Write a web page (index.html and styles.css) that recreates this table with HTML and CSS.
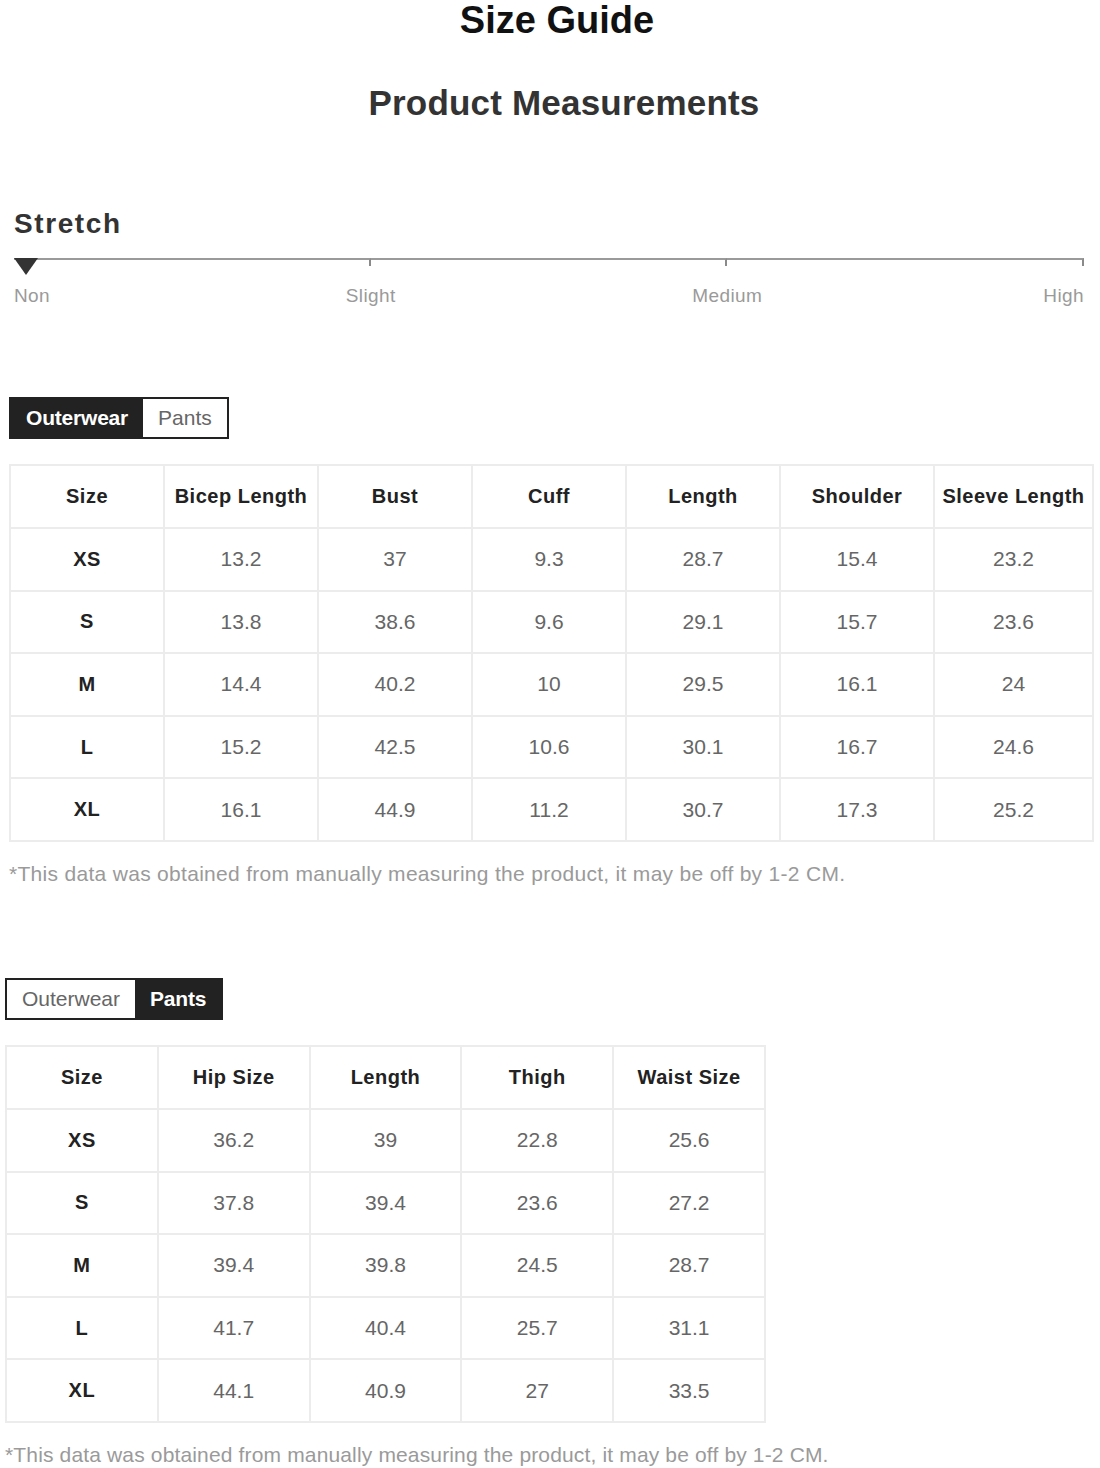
FILE: index.html
```html
<!DOCTYPE html>
<html lang="en">
<head>
<meta charset="utf-8">
<title>Size Guide</title>
<link rel="stylesheet" href="styles.css">
</head>
<body>
<div class="page">
  <h1 class="title">Size Guide</h1>
  <h2 class="subtitle">Product Measurements</h2>

  <section class="stretch">
    <div class="stretch-title">Stretch</div>
    <div class="scale">
      <div class="seg"></div>
      <div class="seg"></div>
      <div class="seg"></div>
      <span class="marker"></span>
    </div>
    <div class="scale-labels">
      <span class="lbl lbl-non">Non</span>
      <span class="lbl lbl-slight">Slight</span>
      <span class="lbl lbl-medium">Medium</span>
      <span class="lbl lbl-high">High</span>
    </div>
  </section>

  <section class="block block-outer">
    <div class="tabs">
      <span class="tab active">Outerwear</span>
      <span class="tab">Pants</span>
    </div>
    <table class="sizes sizes-outer">
      <colgroup>
        <col class="c"><col class="c"><col class="c"><col class="c"><col class="c"><col class="c"><col class="c-last">
      </colgroup>
      <thead>
        <tr><th>Size</th><th>Bicep Length</th><th>Bust</th><th>Cuff</th><th>Length</th><th>Shoulder</th><th>Sleeve Length</th></tr>
      </thead>
      <tbody>
        <tr><th>XS</th><td>13.2</td><td>37</td><td>9.3</td><td>28.7</td><td>15.4</td><td>23.2</td></tr>
        <tr><th>S</th><td>13.8</td><td>38.6</td><td>9.6</td><td>29.1</td><td>15.7</td><td>23.6</td></tr>
        <tr><th>M</th><td>14.4</td><td>40.2</td><td>10</td><td>29.5</td><td>16.1</td><td>24</td></tr>
        <tr><th>L</th><td>15.2</td><td>42.5</td><td>10.6</td><td>30.1</td><td>16.7</td><td>24.6</td></tr>
        <tr><th>XL</th><td>16.1</td><td>44.9</td><td>11.2</td><td>30.7</td><td>17.3</td><td>25.2</td></tr>
      </tbody>
    </table>
    <p class="note">*This data was obtained from manually measuring the product, it may be off by 1-2 CM.</p>
  </section>

  <section class="block block-pants">
    <div class="tabs">
      <span class="tab">Outerwear</span>
      <span class="tab active">Pants</span>
    </div>
    <table class="sizes sizes-pants">
      <thead>
        <tr><th>Size</th><th>Hip Size</th><th>Length</th><th>Thigh</th><th>Waist Size</th></tr>
      </thead>
      <tbody>
        <tr><th>XS</th><td>36.2</td><td>39</td><td>22.8</td><td>25.6</td></tr>
        <tr><th>S</th><td>37.8</td><td>39.4</td><td>23.6</td><td>27.2</td></tr>
        <tr><th>M</th><td>39.4</td><td>39.8</td><td>24.5</td><td>28.7</td></tr>
        <tr><th>L</th><td>41.7</td><td>40.4</td><td>25.7</td><td>31.1</td></tr>
        <tr><th>XL</th><td>44.1</td><td>40.9</td><td>27</td><td>33.5</td></tr>
      </tbody>
    </table>
    <p class="note note-narrow">*This data was obtained from manually measuring the product, it may be off by 1-2 CM.</p>
  </section>
</div>
</body>
</html>
```

FILE: styles.css
```css
html, body {
  margin: 0;
  padding: 0;
  background: #ffffff;
}

body {
  font-family: "Liberation Sans", Arial, sans-serif;
  color: #222;
}

.page {
  width: 1100px;
}

.title {
  margin: 0;
  height: 40px;
  line-height: 40px;
  font-size: 38px;
  font-weight: 700;
  color: #111;
  text-align: center;
  padding-left: 14px;
  letter-spacing: 0;
}

.subtitle {
  margin: 43px 0 0;
  height: 40px;
  line-height: 40px;
  font-size: 35px;
  font-weight: 700;
  color: #333;
  text-align: center;
  padding-left: 28px;
  letter-spacing: 0.2px;
}

/* Stretch */
.stretch {
  margin-top: 86px;
  padding: 0 16px 0 14px;
}

.stretch-title {
  height: 30px;
  line-height: 30px;
  font-size: 28px;
  font-weight: 700;
  color: #333;
  letter-spacing: 1.6px;
}

.scale {
  position: relative;
  margin-top: 19px;
  display: flex;
  height: 8px;
}

.seg {
  flex: 1;
  border-top: 2px solid #9a9a9a;
  border-right: 2px solid #8a8a8a;
}

.marker {
  position: absolute;
  left: 0;
  top: 0;
  width: 0;
  height: 0;
  border-left: 12px solid transparent;
  border-right: 12px solid transparent;
  border-top: 17px solid #333;
}

.scale-labels {
  margin-top: 20px;
  display: grid;
  grid-template-columns: repeat(6, 1fr);
  height: 20px;
  line-height: 20px;
  font-size: 19px;
  letter-spacing: 0.4px;
  color: #9a9a9a;
}

.lbl-non { grid-column: 1; text-align: left; }
.lbl-slight { grid-column: 2 / span 2; text-align: center; }
.lbl-medium { grid-column: 4 / span 2; text-align: center; }
.lbl-high { grid-column: 6; text-align: right; }

/* blocks */
.block-outer {
  margin-top: 91px;
  padding-left: 9px;
}

.block-pants {
  margin-top: 92px;
  padding-left: 5px;
}

.tabs {
  display: inline-flex;
  border: 2px solid #222;
  height: 38px;
}

.tab {
  display: flex;
  align-items: center;
  padding: 0 15px;
  font-size: 21px;
  color: #666;
  background: #fff;
}

.tab.active {
  background: #222;
  color: #fff;
  font-weight: 700;
  letter-spacing: -0.2px;
}

.sizes {
  margin-top: 25px;
  border-collapse: collapse;
  table-layout: fixed;
  border: 2px solid #ececec;
}

.sizes-outer {
  width: 1085px;
}

.sizes-outer col.c {
  width: 154px;
}

.sizes-pants {
  width: 761px;
}

.sizes th,
.sizes td {
  border: 2px solid #ececec;
  text-align: center;
  padding: 0;
  font-size: 20px;
}

.sizes thead tr {
  height: 63px;
}

.sizes tbody tr {
  height: 62.6px;
}

.sizes th {
  font-weight: 700;
  color: #222;
  letter-spacing: 0.5px;
}

.sizes td {
  color: #666;
  font-size: 21px;
}

.note {
  margin: 20px 0 0;
  height: 24px;
  line-height: 24px;
  font-size: 21px;
  letter-spacing: 0.3px;
  color: #9a9a9a;
}

.note-narrow {
  letter-spacing: 0.15px;
}
```
